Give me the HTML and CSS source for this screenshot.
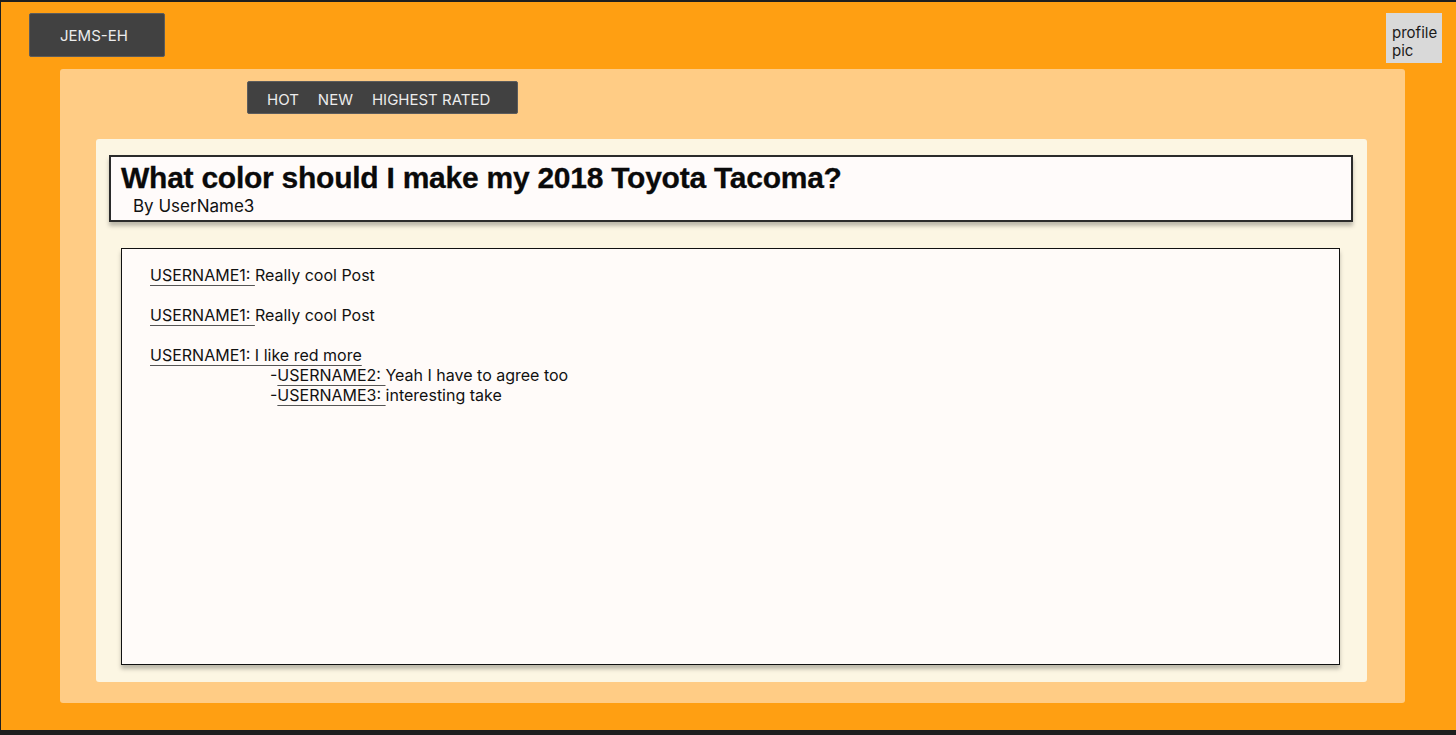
FILE: index.html
```html
<!DOCTYPE html>
<html>
<head>
<meta charset="utf-8">
<title>JEMS-EH</title>
<link rel="stylesheet" href="styles.css">
</head>
<body>
<div class="app">
  <header class="topbar">
    <div class="brand">JEMS-EH</div>
    <div class="profile">profile<br>pic</div>
  </header>
  <main class="panel">
    <nav class="tabs">
      <span class="tab">HOT</span>
      <span class="tab">NEW</span>
      <span class="tab">HIGHEST RATED</span>
    </nav>
    <section class="post">
      <div class="post-head">
        <h1 class="post-title">What color should I make my 2018 Toyota Tacoma?</h1>
        <div class="post-author">By UserName3</div>
      </div>
      <div class="comments">
        <div class="comment"><span class="user">USERNAME1: </span>Really cool Post</div>
        <div class="comment"><span class="user">USERNAME1: </span>Really cool Post</div>
        <div class="comment"><span class="user">USERNAME1: I like red more</span>
          <div class="reply">-<span class="user">USERNAME2: </span>Yeah I have to agree too</div>
          <div class="reply">-<span class="user">USERNAME3: </span>interesting take</div>
        </div>
      </div>
    </section>
  </main>
</div>
</body>
</html>
```
FILE: styles.css
```css
html, body {
  margin: 0;
  padding: 0;
  height: 100%;
}
body {
  background: #1e1e1e;
  font-family: Inter, "Noto Sans", sans-serif;
  overflow: hidden;
}
.app {
  box-sizing: border-box;
  margin: 2px 0 0 1px;
  height: 728px;
  background: #ff9f12;
  padding: 11px 14px 0 28px;
  display: flex;
  flex-direction: column;
}
.topbar {
  display: flex;
  justify-content: space-between;
  align-items: flex-start;
  height: 56px;
}
.brand {
  box-sizing: border-box;
  width: 136px;
  height: 44px;
  background: #414141;
  border: 1px solid #5c5c5c;
  border-radius: 2px;
  color: #ececec;
  font-size: 15px;
  line-height: 44px;
  padding-left: 30px;
}
.profile {
  box-sizing: border-box;
  width: 56px;
  height: 50px;
  background: #d9d9d9;
  color: #1a1a1a;
  font-size: 15px;
  line-height: 18px;
  padding: 11px 0 0 6px;
}
.panel {
  box-sizing: border-box;
  margin-left: 31px;
  width: 1345px;
  height: 634px;
  background: #ffcc85;
  border-radius: 3px;
  padding: 12px 38px 21px 36px;
  display: flex;
  flex-direction: column;
}
.tabs {
  box-sizing: border-box;
  align-self: flex-start;
  margin-left: 151px;
  width: 271px;
  height: 33px;
  background: #414141;
  border: 1px solid #5c5c5c;
  border-radius: 2px;
  display: flex;
  gap: 19px;
  padding-left: 19px;
  color: #ececec;
  font-size: 15px;
  line-height: 35px;
}
.post {
  box-sizing: border-box;
  margin-top: 25px;
  flex: 1;
  background: #fcf6e3;
  border-radius: 3px;
  padding: 16px 14px 17px 13px;
  display: flex;
  flex-direction: column;
}
.post-head {
  box-sizing: border-box;
  height: 67px;
  background: #fffbfa;
  border: 2px solid #2b2b2b;
  box-shadow: 0 4px 4px rgba(0, 0, 0, 0.25);
  padding: 4px 10px 0 10px;
}
.post-title {
  margin: 0;
  font-family: "Liberation Sans", Arial, sans-serif;
  font-weight: bold;
  font-size: 30px;
  line-height: 34px;
  letter-spacing: -0.25px;
  color: #0a0a0a;
  -webkit-text-stroke: 0.3px #0a0a0a;
}
.post-author {
  padding-left: 12px;
  font-size: 17px;
  line-height: 22px;
  color: #111;
}
.comments {
  box-sizing: border-box;
  margin: 26px 13px 0 12px;
  flex: 1;
  background: #fffbf9;
  border: 1.5px solid #111;
  box-shadow: 0 4px 4px rgba(0, 0, 0, 0.25);
  padding: 16px 28px;
  font-size: 16px;
  line-height: 20px;
  color: #111;
}
.comment + .comment {
  margin-top: 20px;
}
.user {
  text-decoration: underline;
  text-decoration-color: #555;
  text-underline-offset: 4px;
}
.reply {
  padding-left: 120px;
}
```
